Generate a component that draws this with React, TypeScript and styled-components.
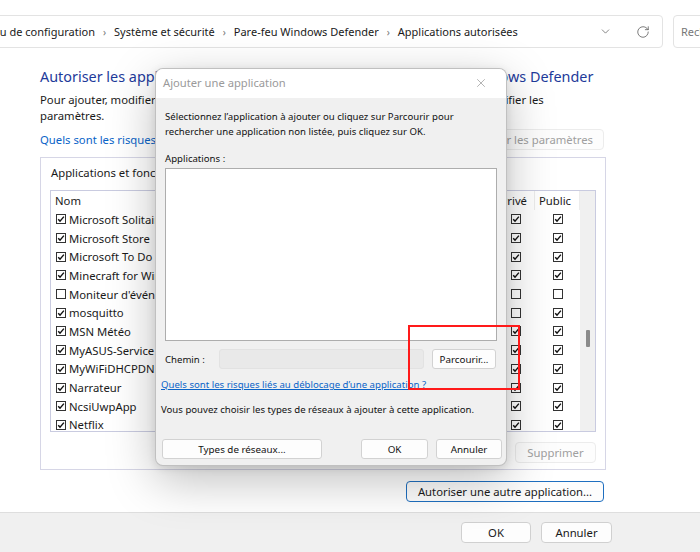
import React from 'react'
import styled, { createGlobalStyle } from 'styled-components'
import { ChevronDown, RotateCw, X } from 'lucide-react'

const GlobalStyle = createGlobalStyle`
  html, body { margin: 0; padding: 0; background: #ffffff; }
  body { font-family: "Noto Sans", "Open Sans", sans-serif; color: #1a1a1a; }
  * { box-sizing: border-box; }
`

const Screen = styled.div`
  position: relative;
  width: 700px;
  height: 552px;
  overflow: hidden;
  display: flex;
  flex-direction: column;
  background: #ffffff;
`

const TopBar = styled.div`
  display: flex;
  gap: 10px;
  padding-top: 15px;
  height: 56px;
  flex-shrink: 0;
`

const AddressBar = styled.div`
  flex-shrink: 0;
  margin-left: -50px;
  width: 713px;
  height: 33px;
  border: 1px solid #e3e3e3;
  border-radius: 4px;
  display: flex;
  align-items: center;
  padding-left: 10px;
  padding-right: 12px;
  font-size: 11px;
`

const Crumb = styled.span`
  white-space: nowrap;
  color: #1a1a1a;
`

const Sep = styled.span`
  color: #777;
  font-size: 10px;
  margin: 0 8px;
`

const BarIcons = styled.div`
  margin-left: auto;
  display: flex;
  align-items: center;
  gap: 24px;
  color: #555;
`

const SearchBox = styled.div`
  flex-shrink: 0;
  width: 200px;
  height: 33px;
  border: 1px solid #e3e3e3;
  border-radius: 4px;
  display: flex;
  align-items: center;
  padding-left: 7px;
  font-size: 11px;
  color: #777;
  white-space: nowrap;
`

const Content = styled.div`
  flex: 1;
  display: flex;
  flex-direction: column;
  padding: 11px 0 0 40px;
  width: 606px;
  font-size: 11.3px;
`

const Title = styled.h1`
  margin: 0;
  font-size: 14.4px;
  line-height: 20px;
  font-weight: 400;
  color: #1e3a9a;
  white-space: nowrap;
`

const Desc = styled.p`
  margin: 5px 0 0;
  line-height: 16px;
`

const LinkRow = styled.div`
  margin-top: 5px;
  height: 21px;
  display: flex;
  align-items: center;
  justify-content: space-between;
  padding-right: 2px;
`

const BlueLink = styled.span`
  color: #0a64c8;
  white-space: nowrap;
`

const WinButton = styled.button<{ $w?: number; $disabled?: boolean; $accent?: boolean }>`
  font-family: inherit;
  font-size: inherit;
  height: 21px;
  width: ${(p) => (p.$w ? `${p.$w}px` : 'auto')};
  padding: 0 10px;
  background: #fdfdfd;
  border: 1px solid ${(p) => (p.$accent ? '#1f6fc0' : p.$disabled ? '#ececec' : '#d0d0d0')};
  border-radius: 4px;
  color: ${(p) => (p.$disabled ? '#a0a0a0' : '#1a1a1a')};
  white-space: nowrap;
  display: flex;
  align-items: center;
  justify-content: center;
`

const GroupBox = styled.div`
  margin-top: 7px;
  border: 1px solid #d6d6e6;
  padding: 7px 9px 6px 9px;
  display: flex;
  flex-direction: column;
`

const Legend = styled.div`
  line-height: 16px;
  padding-left: 1px;
  white-space: nowrap;
`

const ListFrame = styled.div`
  margin-top: 9px;
  height: 242px;
  border: 1px solid #c9cbe0;
  display: flex;
  overflow: hidden;
`

const ListTable = styled.div`
  flex: 1;
  display: flex;
  flex-direction: column;
`

const Row = styled.div<{ $head?: boolean }>`
  display: grid;
  grid-template-columns: 1fr 38px 45px;
  height: ${(p) => (p.$head ? '19px' : '18.7px')};
  flex-shrink: 0;
  align-items: center;
`

const HeadCell = styled.div<{ $right?: boolean }>`
  height: 100%;
  display: flex;
  align-items: center;
  padding-left: ${(p) => (p.$right ? '0' : '4px')};
  justify-content: ${(p) => (p.$right ? 'flex-end' : 'flex-start')};
  padding-right: ${(p) => (p.$right ? '7px' : '0')};
  border-right: 1px solid #ececec;
  white-space: nowrap;
  overflow: hidden;
`

const NameCell = styled.div`
  display: flex;
  align-items: center;
  gap: 3px;
  padding-left: 5px;
  white-space: nowrap;
  overflow: hidden;
`

const BoxCell = styled.div`
  display: flex;
  justify-content: center;
  align-items: center;
`

const ScrollTrack = styled.div`
  width: 15px;
  background: #f0f0f0;
  position: relative;
  flex-shrink: 0;
`

const ScrollThumb = styled.div`
  position: absolute;
  left: 6px;
  top: 139px;
  width: 4px;
  height: 17px;
  border-radius: 1px;
  background: #8a8a8a;
`

const ButtonRow = styled.div<{ $mt: number }>`
  margin-top: ${(p) => p.$mt}px;
  display: flex;
  justify-content: flex-end;
  gap: 8px;
`

const Footer = styled.div`
  height: 40px;
  flex-shrink: 0;
  border-top: 1px solid #dedede;
  background: #f0f0f0;
  display: flex;
  align-items: center;
  justify-content: flex-end;
  gap: 10px;
  padding-right: 88px;
  font-size: 11.3px;
`

/* modal window lying over the control panel */
const Dialog = styled.div`
  position: absolute;
  left: 155px;
  top: 68px;
  width: 352px;
  height: 398px;
  border: 1px solid rgba(0, 0, 0, 0.2);
  border-radius: 8px;
  overflow: hidden;
  background: #f0f0f0;
  box-shadow: 0 14px 48px rgba(0, 0, 0, 0.26), 0 2px 8px rgba(0, 0, 0, 0.1);
  display: flex;
  flex-direction: column;
  font-size: 9.6px;
`

const DialogTitle = styled.div`
  height: 29px;
  background: #ffffff;
  display: flex;
  align-items: center;
  justify-content: space-between;
  padding: 0 18px 2px 7px;
  font-size: 11.2px;
  color: #9a9a9a;
  flex-shrink: 0;
`

const DialogBody = styled.div`
  flex: 1;
  display: flex;
  flex-direction: column;
  padding: 11px 9px 6px 9px;
  color: #111;
`

const DText = styled.div<{ $mt?: number; $shift?: boolean }>`
  margin-top: ${(p) => p.$mt ?? 0}px;
  margin-left: ${(p) => (p.$shift ? '-4px' : '0')};
  line-height: 15px;
  white-space: nowrap;
`

const DLink = styled(DText)`
  color: #0a64c8;
  text-decoration: underline;
`

const AppsBox = styled.div`
  margin-top: 2px;
  height: 173px;
  background: #ffffff;
  border: 1px solid #adadad;
`

const PathRow = styled.div`
  margin-top: 8px;
  height: 20px;
  display: flex;
  align-items: center;
  gap: 8px;
  padding-right: 1px;
`

const PathLabel = styled.span`
  width: 46px;
`

const PathInput = styled.div`
  flex: 1;
  height: 20px;
  background: #e9e9e9;
  border: 1px solid #e2e2e2;
  border-radius: 3px;
`

const DButton = styled.button<{ $w: number }>`
  font-family: inherit;
  font-size: 9.8px;
  height: 20px;
  width: ${(p) => p.$w}px;
  background: #fdfdfd;
  border: 1px solid #d2d2d2;
  border-radius: 3px;
  color: #111;
  padding: 0;
  white-space: nowrap;
`

const DButtonRow = styled.div`
  margin: auto -5px 0 -3px;
  display: flex;
  gap: 8px;
  > :first-child {
    margin-right: auto;
  }
`

/* red annotation drawn over the screenshot */
const Highlight = styled.div`
  position: absolute;
  left: 408px;
  top: 325px;
  width: 112px;
  height: 65px;
  border: 2px solid #ff1a1a;
  pointer-events: none;
`

const Check = ({ on }: { on: boolean }) => (
  <svg width="10" height="10" viewBox="0 0 10 10" style={{ flexShrink: 0 }}>
    <rect x="0.5" y="0.5" width="9" height="9" fill="#fff" stroke="#333" />
    {on && <path d="M2.2 5.2 L4 7.1 L7.9 2.6" fill="none" stroke="#111" strokeWidth="1.4" />}
  </svg>
)

const apps = [
  { name: 'Microsoft Solitaire Collection', on: true, priv: true, pub: true },
  { name: 'Microsoft Store', on: true, priv: true, pub: true },
  { name: 'Microsoft To Do', on: true, priv: true, pub: true },
  { name: 'Minecraft for Windows', on: true, priv: true, pub: true },
  { name: "Moniteur d'événements de l'Assistant", on: false, priv: false, pub: false },
  { name: 'mosquitto', on: true, priv: false, pub: true },
  { name: 'MSN Météo', on: true, priv: true, pub: true },
  { name: 'MyASUS-Service Area', on: true, priv: true, pub: true },
  { name: 'MyWiFiDHCPDNS', on: true, priv: true, pub: true },
  { name: 'Narrateur', on: true, priv: true, pub: true },
  { name: 'NcsiUwpApp', on: true, priv: true, pub: true },
  { name: 'Netflix', on: true, priv: true, pub: true },
]

const App: React.FC = () => {
  return (
    <Screen>
      <GlobalStyle />
      <TopBar>
        <AddressBar>
          <Crumb>Panneau de configuration</Crumb>
          <Sep>›</Sep>
          <Crumb>Système et sécurité</Crumb>
          <Sep>›</Sep>
          <Crumb>Pare-feu Windows Defender</Crumb>
          <Sep>›</Sep>
          <Crumb>Applications autorisées</Crumb>
          <BarIcons>
            <ChevronDown size={13} strokeWidth={1.3} />
            <RotateCw size={14} strokeWidth={1.3} />
          </BarIcons>
        </AddressBar>
        <SearchBox>Rechercher dans le Panneau</SearchBox>
      </TopBar>

      <Content>
        <Title>Autoriser les applications à communiquer à travers le Pare-feu Windows Defender</Title>
        <Desc>
          Pour ajouter, modifier ou supprimer des applications et ports autorisés, cliquez sur Modifier les
          <br />
          paramètres.
        </Desc>
        <LinkRow>
          <BlueLink>Quels sont les risques si une application est autorisée à communiquer ?</BlueLink>
          <WinButton $disabled>Modifier les paramètres</WinButton>
        </LinkRow>

        <GroupBox>
          <Legend>Applications et fonctionnalités autorisées :</Legend>
          <ListFrame>
            <ListTable>
              <Row $head>
                <HeadCell>Nom</HeadCell>
                <HeadCell $right>Privé</HeadCell>
                <HeadCell>Public</HeadCell>
              </Row>
              {apps.map((a) => (
                <Row key={a.name}>
                  <NameCell>
                    <Check on={a.on} />
                    {a.name}
                  </NameCell>
                  <BoxCell>
                    <Check on={a.priv} />
                  </BoxCell>
                  <BoxCell>
                    <Check on={a.pub} />
                  </BoxCell>
                </Row>
              ))}
            </ListTable>
            <ScrollTrack>
              <ScrollThumb />
            </ScrollTrack>
          </ListFrame>
          <ButtonRow $mt={10}>
            <WinButton $w={74} $disabled>Détails...</WinButton>
            <WinButton $w={81} $disabled>Supprimer</WinButton>
          </ButtonRow>
        </GroupBox>

        <ButtonRow $mt={11} style={{ paddingRight: 2 }}>
          <WinButton $w={198} $accent>Autoriser une autre application...</WinButton>
        </ButtonRow>
      </Content>

      <Footer>
        <WinButton $w={70}>OK</WinButton>
        <WinButton $w={71}>Annuler</WinButton>
      </Footer>

      <Dialog>
        <DialogTitle>
          <span>Ajouter une application</span>
          <X size={14} strokeWidth={1.1} color="#8a8a8a" />
        </DialogTitle>
        <DialogBody>
          <DText>Sélectionnez l’application à ajouter ou cliquez sur Parcourir pour</DText>
          <DText>rechercher une application non listée, puis cliquez sur OK.</DText>
          <DText $mt={12}>Applications :</DText>
          <AppsBox />
          <PathRow>
            <PathLabel>Chemin :</PathLabel>
            <PathInput />
            <DButton $w={64}>Parcourir...</DButton>
          </PathRow>
          <DLink $mt={8} $shift>
            Quels sont les risques liés au déblocage d’une application ?
          </DLink>
          <DText $mt={10} $shift>
            Vous pouvez choisir les types de réseaux à ajouter à cette application.
          </DText>
          <DButtonRow>
            <DButton $w={160}>Types de réseaux...</DButton>
            <DButton $w={67}>OK</DButton>
            <DButton $w={66}>Annuler</DButton>
          </DButtonRow>
        </DialogBody>
      </Dialog>

      <Highlight />
    </Screen>
  )
}

export default App
